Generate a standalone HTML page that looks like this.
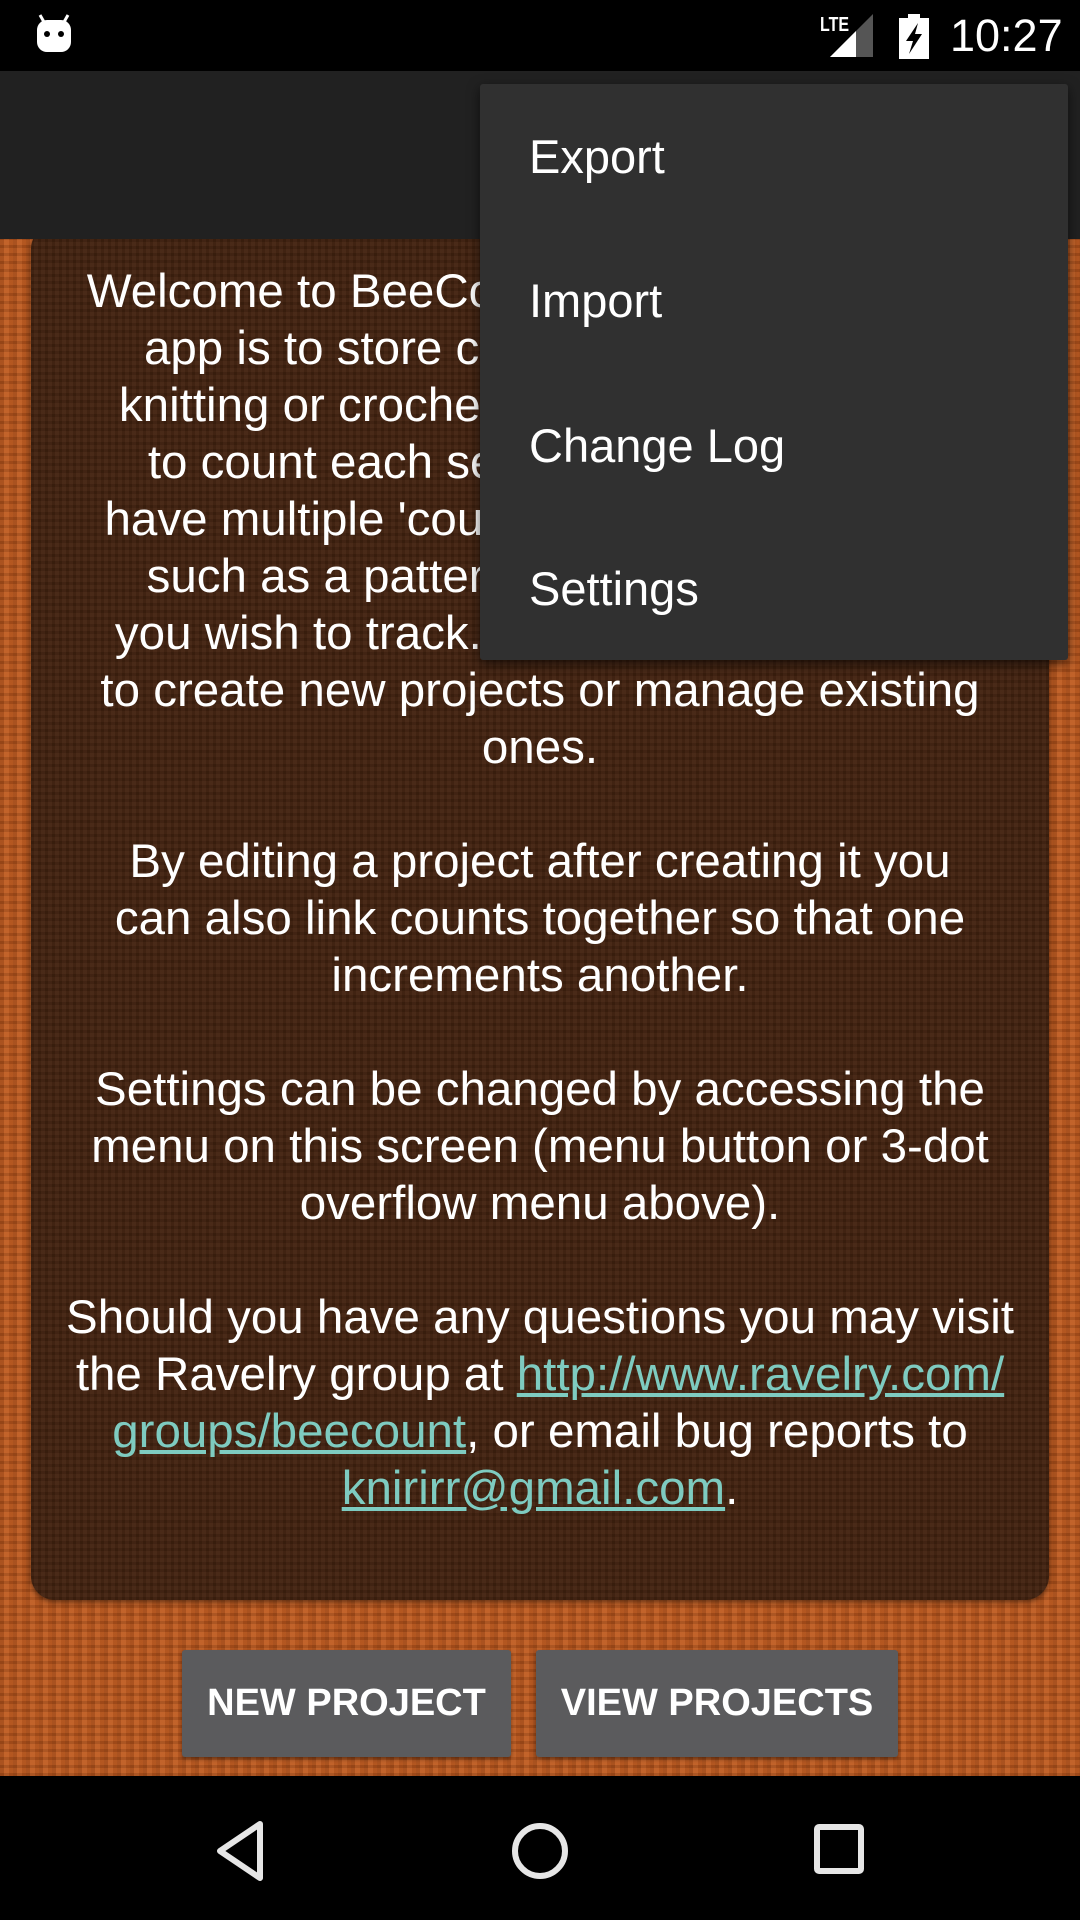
<!DOCTYPE html>
<html><head><meta charset="utf-8"><style>
*{margin:0;padding:0;box-sizing:border-box}
body{width:1080px;height:1920px;overflow:hidden;position:relative;font-family:"Liberation Sans",sans-serif;background:#b4531d;}
.bg{position:absolute;left:0;top:239px;width:1080px;height:1537px;
background:
repeating-linear-gradient(90deg,rgba(0,0,0,.10) 0 4px,rgba(255,200,150,.07) 4px 9px,rgba(0,0,0,.05) 9px 13px),
repeating-linear-gradient(0deg,rgba(0,0,0,.10) 0 3px,rgba(255,180,120,.06) 3px 8px),
#b9561d;}
.status{position:absolute;left:0;top:0;width:1080px;height:71px;background:#000;z-index:3}
.appbar{position:absolute;left:0;top:71px;width:1080px;height:168px;background:#212121;z-index:2}
.panel{position:absolute;left:31px;top:225px;width:1018px;height:1375px;border-radius:24px;
background:
repeating-linear-gradient(90deg,rgba(0,0,0,.08) 0 3px,rgba(255,255,255,.02) 3px 7px),
repeating-linear-gradient(0deg,rgba(0,0,0,.08) 0 3px,rgba(255,255,255,.02) 3px 7px),
#42220f;box-shadow:0 2px 6px rgba(0,0,0,.5)}
.txt{position:absolute;left:31px;top:263px;width:1018px;text-align:center;color:#fff;font-size:47.5px;line-height:57px;white-space:nowrap}
.txt a{color:#7ecbc0;text-decoration:underline}
.menu{position:absolute;left:480px;top:84px;width:588px;height:576px;background:#303030;box-shadow:0 4px 12px rgba(0,0,0,.6);border-radius:3px;z-index:4}
.menu div{position:absolute;left:49px;color:#fff;font-size:47px}
.btn{position:absolute;top:1650px;height:107px;background:#5b5b5d;color:#fff;font-size:38px;font-weight:bold;display:flex;align-items:center;justify-content:center;border-radius:3px;box-shadow:0 2px 4px rgba(0,0,0,.4)}
.nav{position:absolute;left:0;top:1776px;width:1080px;height:144px;background:#000}
</style></head><body>
<div class="bg"></div>
<div class="status">
<svg style="position:absolute;left:34px;top:14px" width="40" height="40" viewBox="0 0 40 40"><rect x="3" y="6" width="34" height="32" rx="10" fill="#fff"/><line x1="10" y1="8" x2="6" y2="1" stroke="#fff" stroke-width="3"/><line x1="30" y1="8" x2="34" y2="1" stroke="#fff" stroke-width="3"/><circle cx="13" cy="20" r="3" fill="#000"/><circle cx="27" cy="20" r="3" fill="#000"/></svg>
<div style="position:absolute;left:820px;top:14px;color:#fff;font-size:20px;font-weight:bold;transform:scaleX(.8);transform-origin:left">LTE</div>
<svg style="position:absolute;left:830px;top:14px" width="44" height="44"><polygon points="0,43 43,0 43,43" fill="#555"/><polygon points="0,43 26,17 26,43" fill="#fff"/></svg>
<svg style="position:absolute;left:899px;top:14px" width="30" height="45" viewBox="0 0 30 45"><rect x="9" y="0" width="12" height="5" fill="#fff"/><rect x="0" y="4" width="30" height="41" fill="#fff"/><polygon points="19,9 7,27 14,27 10,40 23,20 16,20" fill="#000"/></svg>
<div style="position:absolute;left:950px;top:10px;color:#fff;font-size:45px">10:27</div>
</div>
<div class="appbar"></div>
<div class="panel"></div>
<div class="txt">Welcome to BeeCount! The purpose of this<br>app is to store counts for your various<br>knitting or crochet projects. It allows you<br>to count each separate project and to<br>have multiple 'counts' within each project,<br>such as a pattern repeat or row count<br>you wish to track. Use the buttons below<br>to create new projects or manage existing<br>ones.<br><br>By editing a project after creating it you<br>can also link counts together so that one<br>increments another.<br><br>Settings can be changed by accessing the<br>menu on this screen (menu button or 3-dot<br>overflow menu above).<br><br>Should you have any questions you may visit<br>the Ravelry group at <a>http://www.ravelry.com/<br>groups/beecount</a>, or email bug reports to<br><a>knirirr@gmail.com</a>.</div>
<div class="menu">
<div style="top:45px">Export</div>
<div style="top:189px">Import</div>
<div style="top:334px">Change Log</div>
<div style="top:477px">Settings</div>
</div>
<div class="btn" style="left:182px;width:329px">NEW PROJECT</div>
<div class="btn" style="left:536px;width:362px">VIEW PROJECTS</div>
<div class="nav">
<svg style="position:absolute;left:210px;top:40px" width="60" height="70" viewBox="0 0 60 70"><path d="M50 8 L10 35 L50 62 Z" fill="none" stroke="#e6e6e6" stroke-width="6" stroke-linejoin="round"/></svg>
<svg style="position:absolute;left:505px;top:40px" width="70" height="70"><circle cx="35" cy="35" r="25" fill="none" stroke="#e6e6e6" stroke-width="6"/></svg>
<svg style="position:absolute;left:810px;top:44px" width="60" height="60"><rect x="7" y="7" width="44" height="44" rx="2" fill="none" stroke="#e6e6e6" stroke-width="6"/></svg>
</div>
</body></html>
